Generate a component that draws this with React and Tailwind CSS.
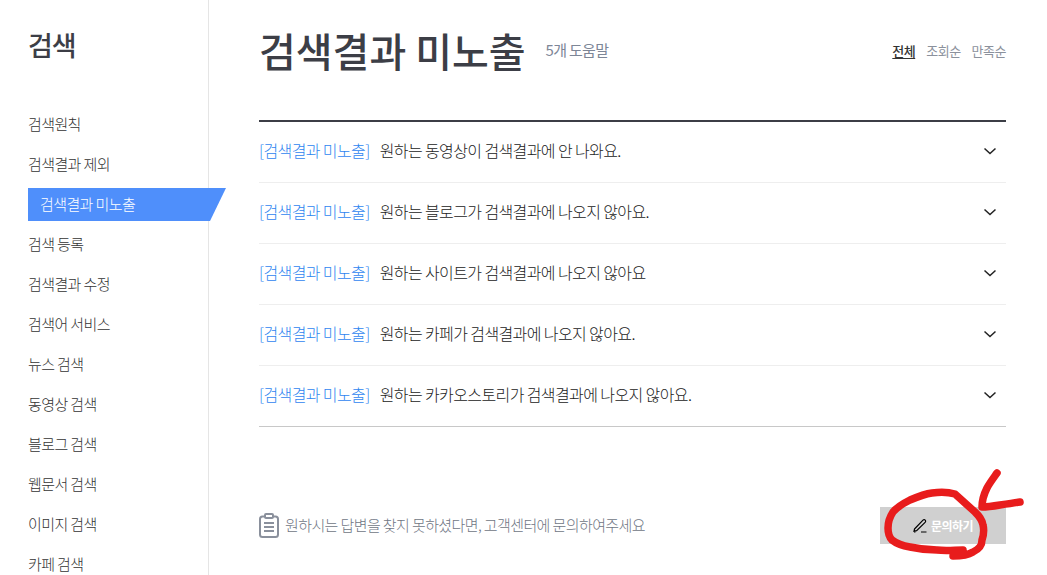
const nav = ["검색원칙","검색결과 제외","검색결과 미노출","검색 등록","검색결과 수정","검색어 서비스","뉴스 검색","동영상 검색","블로그 검색","웹문서 검색","이미지 검색","카페 검색"];
const rows = ["원하는 동영상이 검색결과에 안 나와요.","원하는 블로그가 검색결과에 나오지 않아요.","원하는 사이트가 검색결과에 나오지 않아요","원하는 카페가 검색결과에 나오지 않아요.","원하는 카카오스토리가 검색결과에 나오지 않아요."];

export default function App() {
  return (
    <div className="relative flex h-[575px] w-[1047px] overflow-hidden bg-white font-['Noto_Sans_CJK_KR','Noto_Sans',sans-serif] text-[#333]">
      <aside className="w-[209px] shrink-0 border-r border-[#e5e5e5]">
        <h2 className="mt-[25px] ml-[28px] h-[40px] text-[27px] leading-[40px] font-medium tracking-[-1px] text-[#3c3e46]">검색</h2>
        <ul className="mt-[39px] ml-[28px]">
          {nav.map((n) =>
            n === "검색결과 미노출" ? (
              <li key={n} className="mt-[4px] mb-[3px] flex h-[33px] w-[198px] items-center bg-[#4f8ffb] pl-[12px] text-[15px] font-light tracking-[-0.6px] text-white [clip-path:polygon(0_0,100%_0,calc(100%-16px)_100%,0_100%)]">{n}</li>
            ) : (
              <li key={n} className="flex h-[40px] items-center text-[15px] font-light tracking-[-0.6px] text-[#333]">{n}</li>
            )
          )}
        </ul>
      </aside>
      <main className="ml-[50px] w-[747px] shrink-0">
        <header className="flex h-[120px] items-start">
          <h1 className="mt-[20px] text-[40px] leading-[60px] font-medium tracking-[0px] text-[#3c3e46]">검색결과 미노출</h1>
          <span className="mt-[38px] ml-[20px] text-[15px] leading-[24px] tracking-[-0.7px] text-[#7d8697]">5개 도움말</span>
          <div className="mt-[39px] ml-auto flex gap-[11px] text-[13px] leading-[24px] tracking-[-0.5px] text-[#8b919c]">
            <span className="font-medium text-[#333] underline underline-offset-2">전체</span>
            <span>조회순</span>
            <span>만족순</span>
          </div>
        </header>
        <ul className="border-t-2 border-b border-t-[#3c3e46] border-b-[#c8c8c8]">
          {rows.map((r, i) => (
            <li key={r} className={`flex items-center pb-[2px] text-[16px] font-light tracking-[-0.6px] ${i < 4 ? "h-[61px] border-b border-[#eeeeee]" : "h-[60px]"}`}>
              <span className="mb-[3px] text-[#2f86f0]">[검색결과 미노출]</span>
              <span className="mb-[3px] ml-[10px] text-[#222]">{r}</span>
              <svg className="mr-[9px] ml-auto" width="14" height="8" viewBox="0 0 14 8" fill="none" stroke="#222" strokeWidth="1.5"><path d="M1.5 1.5 7 6.5 12.5 1.5" /></svg>
            </li>
          ))}
        </ul>
        <div className="mt-[80px] flex h-[37px] items-center">
          <svg width="20" height="25" viewBox="0 0 20 25" fill="none" stroke="#8a909c" strokeWidth="2">
            <rect x="1" y="3.5" width="18" height="20.5" rx="2.5" />
            <rect x="6" y="1" width="8" height="4" rx="1" fill="#fff" />
            <path d="M5 10h10M5 14h10M5 18h10" />
          </svg>
          <span className="ml-[6px] text-[15px] font-light tracking-[-0.6px] text-[#6f7684]">원하시는 답변을 찾지 못하셨다면, 고객센터에 문의하여주세요</span>
          <button className="ml-auto flex h-[37px] w-[126px] items-center justify-center gap-[3px] bg-[#d0d0d0] text-[12px] font-bold tracking-[-0.5px] text-white">
            <svg width="15" height="15" viewBox="0 0 15 15" fill="none" stroke="#000" strokeWidth="1.2"><path d="M1.5 11 10 2.2c.7-.7 1.6-.7 2.2-.1s.6 1.5-.1 2.2L3.6 12.6l-2.6.6z" /><path d="M1 14h1.5M8 14h5.5" /></svg>
            문의하기
          </button>
        </div>
      </main>
      <svg className="pointer-events-none absolute inset-0" width="1047" height="575" fill="none" stroke="#e81c1c" strokeWidth="7.5" strokeLinecap="round" strokeLinejoin="round">
        <path d="M953 556C960 556 968 555 973 552C979 549 982 546 982 540C984 534 984 529 983 525C982 519 979 516 975 512L955 494C948 492 940 492 932 493C924 494 917 497 910 500C902 504 897 507 893 512C889 518 888 523 888 528C888 534 889 537 892 540C897 544 904 546 910 547C919 549 928 550 937 550C946 551 955 550 963 550" />
        <path d="M997 473C992 480 989 484 987 488C984 494 982 500 982 507C988 507 994 506 1000 505C1007 504 1014 503 1020 502" />
      </svg>
    </div>
  );
}
